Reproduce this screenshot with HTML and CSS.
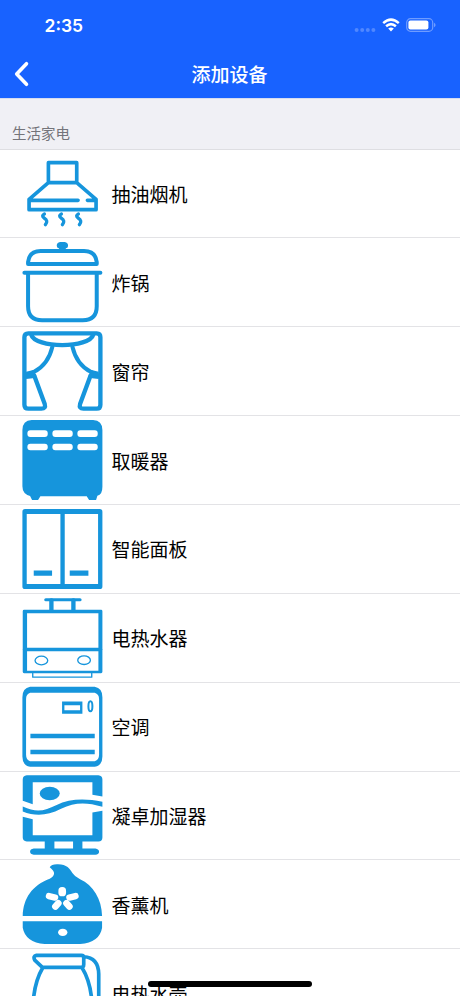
FILE: index.html
```html
<!DOCTYPE html>
<html lang="zh-CN">
<head>
<meta charset="utf-8">
<title>添加设备</title>
<link rel="stylesheet" href="styles.css">
</head>
<body>
<div class="screen">
  <header class="header">
    <div class="status">
      <span class="time">2:35</span>
      <div class="indicators">
        <svg class="dots" width="22" height="6" viewBox="0 0 22 6"><circle cx="2.6" cy="3" r="2"/><circle cx="8.2" cy="3" r="2"/><circle cx="13.8" cy="3" r="2"/><circle cx="19.4" cy="3" r="2"/></svg>
        <svg class="wifi" width="18" height="14" viewBox="0 0 18 14"><path d="M1.2 5.1Q9 -1.8 16.8 5.1M4.1 8.3Q9 4 13.9 8.3"/><path class="tip" d="M6.2 10.5Q9 8.3 11.8 10.5L9 13.5Z"/></svg>
        <svg class="battery" width="30" height="14" viewBox="0 0 30 14"><rect class="case" x=".7" y=".7" width="26" height="12.6" rx="3.8"/><rect class="level" x="2.4" y="2.4" width="20" height="9.2" rx="2"/><path class="cap" d="M28 4.7q1.6 .7 1.6 2.3t-1.6 2.3z"/></svg>
      </div>
    </div>
    <nav class="nav">
      <svg class="back" width="16" height="26" viewBox="0 0 16 26"><path d="M12.5 2.7L2.7 13L12.5 23.3"/></svg>
      <h1 class="title">添加设备</h1>
    </nav>
  </header>
  <h2 class="section">生活家电</h2>
  <ul class="list">
    <li class="row">
      <svg class="icon" viewBox="35.8 9 240 240"><g class="line"><path stroke-width="11" d="M115 38H200V98H115ZM115 98L57 148V179H258V148L200 98M57 151H204M232 151H258"/><path stroke-width="10" d="M103 192q-10 5 -1 12q14 8 4 20M154 192q-10 5 -1 12q14 8 4 20M205 192q-10 5 -1 12q14 8 4 20"/></g></svg>
      <span class="name">抽油烟机</span>
    </li>
    <li class="row">
      <svg class="icon" viewBox="35.8 12 240 240"><g class="line"><path stroke-width="12" d="M54 78V72Q58 39 92 39H222Q256 39 260 72V78ZM43 104H271M54 104V205Q54 247 96 247H218Q260 247 260 205V104"/></g><path class="fill" d="M150 12H164Q174 14 174 23Q174 29 168 31L164 36H150L146 31Q140 29 140 23Q140 14 150 12Z"/></svg>
      <span class="name">炸锅</span>
    </li>
    <li class="row">
      <svg class="icon" viewBox="35.8 15 240 240"><g class="line" stroke-width="13"><path d="M43 34Q43 22 55 22H260Q271 22 271 34V236Q271 248 260 248H220Q206 248 210 234L241 150M43 34V236Q43 248 55 248H94Q108 248 104 234L73 150M63 25C75 68 238 68 250 25"/><path stroke-width="12" d="M127 62Q114 116 72 137L46 150M187 62Q200 116 242 137L268 150"/></g><path class="fill" d="M48 137L70 132L79 148L68 157L48 159ZM266 137L244 132L235 148L246 157L266 159Z"/></svg>
      <span class="name">窗帘</span>
    </li>
    <li class="row">
      <svg class="icon" viewBox="35.8 15 240 240"><path class="fill" d="M65 15H249Q277 17 277 45V215Q277 239 262 242L258 255H237L230 244H91L84 255H66L60 243Q37 237 37 214V45Q37 17 65 15Z"/><g class="white"><rect x="52" y="46" width="61" height="20" rx="9"/><rect x="127" y="46" width="61" height="20" rx="9"/><rect x="202" y="46" width="61" height="20" rx="9"/><rect x="52" y="86" width="61" height="20" rx="9"/><rect x="127" y="86" width="61" height="20" rx="9"/><rect x="202" y="86" width="61" height="20" rx="9"/></g></svg>
      <span class="name">取暖器</span>
    </li>
    <li class="row">
      <svg class="icon" viewBox="35.8 14.7 240 240"><path class="fill" fill-rule="evenodd" d="M45 15H269Q277 15 277 23V247Q277 255 269 255H45Q37 255 37 247V23Q37 15 45 15ZM50 30V240H151V30ZM164 30V240H264V30Z"/><path class="fill" d="M71 199H126V215H71ZM179 199H235V215H179Z"/></svg>
      <span class="name">智能面板</span>
    </li>
    <li class="row">
      <svg class="icon" viewBox="35.8 14.5 240 240"><g class="line"><path stroke-width="9" d="M107 20H210"/><path stroke-width="13" d="M124 22V53M190 22V53"/><path stroke-width="11" d="M44 169H271"/><path stroke-width="4" d="M68 240V252H245V240"/><ellipse cx="94" cy="202" rx="19" ry="13" stroke-width="4"/><ellipse cx="222" cy="201" rx="19" ry="13" stroke-width="4"/></g><path class="fill" fill-rule="evenodd" d="M42 50H273Q277 50 277 54V236Q277 240 273 240H42Q38 240 38 236V54Q38 50 42 50ZM51 60V233H265V60Z"/></svg>
      <span class="name">电热水器</span>
    </li>
    <li class="row">
      <svg class="icon" viewBox="35.8 14.5 240 240"><path class="fill" fill-rule="evenodd" d="M60 14H254Q277 18 277 45V223Q277 250 254 254H60Q37 250 37 223V45Q37 18 60 14ZM60 32Q48 36 48 51V218Q48 234 60 237H254Q267 234 267 218V51Q267 36 254 32Z"/><path class="fill" fill-rule="evenodd" d="M156 58H217V95H156ZM163 69V84H210V69ZM61 155H254V168H61ZM61 203H254V216H61Z"/><ellipse class="ring" cx="241" cy="72" rx="6" ry="15" stroke-width="6"/></svg>
      <span class="name">空调</span>
    </li>
    <li class="row">
      <svg class="icon" viewBox="35.8 16.5 240 240"><path class="fill" d="M50 17H265Q277 18 277 30V81L247 76V38H68V104L38 94V30Q38 18 50 17ZM38 142L68 149V197H247V129L277 124V204Q277 216 265 216H217V237H256Q267 239 267 247Q267 255 256 256H71Q60 254 60 246Q60 239 71 237H104V216H50Q38 215 38 204ZM133 216V237H189V216ZM38 111C82 132 106 122 138 107C180 87 225 86 277 97V112C229 98 194 98 153 118C110 140 74 140 38 126Z"/><ellipse class="fill" cx="119" cy="72" rx="30" ry="20"/></svg>
      <span class="name">凝卓加湿器</span>
    </li>
    <li class="row">
      <svg class="icon" viewBox="35.8 16 240 240"><path class="fill" d="M38 172C39 119 67 79 119 60Q132 54 132 44Q132 37 119 26Q124 16 144 17C170 17 180 31 187 43Q194 54 210 62C249 80 275 121 276 172ZM38 188H276V207Q269 251 210 256H104Q46 251 38 207Z"/><g class="white"><rect x="145" y="85" width="23" height="28" rx="11"/><rect x="107" y="105" width="38" height="19" rx="9.5" transform="rotate(14 126 114)"/><rect x="168" y="105" width="38" height="19" rx="9.5" transform="rotate(-14 187 114)"/><rect x="124" y="129" width="33" height="20" rx="10" transform="rotate(-48 140 139)"/><rect x="157" y="129" width="33" height="20" rx="10" transform="rotate(48 174 139)"/><ellipse cx="158" cy="221" rx="14" ry="11"/></g></svg>
      <span class="name">香薰机</span>
    </li>
    <li class="row">
      <svg class="icon" viewBox="35.8 39.8 240 240"><g class="line" stroke-width="11"><path d="M79 47H214Q221 47 221 54V74Q221 83 212 83H97L74 61Q68 49 79 47ZM221 51Q265 53 266 103V220Q266 240 248 240M98 84Q72 128 69 195V275H246V195Q243 128 216 84"/></g></svg>
      <span class="name">电热水壶</span>
    </li>
  </ul>
  <div class="home"></div>
</div>
</body>
</html>
```
FILE: styles.css
```css
* {
  box-sizing: border-box;
}

body {
  margin: 0;
  font-family: "Noto Sans CJK SC", sans-serif;
  background: #fff;
}

.screen {
  position: relative;
  width: 460px;
  height: 996px;
  overflow: hidden;
}

.header {
  height: 98px;
  background: #1862ff;
  color: #fff;
}

.status {
  display: flex;
  justify-content: space-between;
  align-items: center;
  height: 50px;
  padding: 0 24px 0 44.5px;
}

.time {
  padding-top: 1px;
  font: 600 17.5px/22px Inter, sans-serif;
}

.indicators {
  display: flex;
  align-items: center;
}

.dots {
  fill: #5087ff;
  margin: 9px 6px 0 0;
}

.wifi {
  fill: none;
  stroke: #fff;
  stroke-width: 2.5;
  margin-right: 6px;
}

.wifi .tip {
  fill: #fff;
  stroke: none;
}

.case {
  fill: none;
  stroke: #6f9cff;
  stroke-width: 1.2;
}

.level {
  fill: #fff;
}

.cap {
  fill: #6f9cff;
}

.nav {
  display: grid;
  grid-template-columns: 60px 1fr 61px;
  align-items: center;
  height: 47px;
}

.back {
  margin-left: 13.5px;
  fill: none;
  stroke: #fff;
  stroke-width: 3.6;
  stroke-linecap: round;
  stroke-linejoin: round;
}

.title {
  margin: 0;
  text-align: center;
  font-size: 19px;
  line-height: 28px;
  font-weight: 500;
}

.section {
  display: flex;
  align-items: flex-end;
  height: 52px;
  margin: 0;
  padding: 0 12px 5px;
  border-top: 1px solid #d5dcf0;
  border-bottom: 1px solid #dedee2;
  background: #f0f0f5;
  color: #74747a;
  font-size: 14.5px;
  line-height: 22px;
  font-weight: 400;
}

.list {
  margin: -0.5px 0 0;
  padding: 0;
  list-style: none;
}

.row {
  display: flex;
  align-items: center;
  height: 88.86px;
  padding-left: 22px;
  border-bottom: 1px solid #e3e3e6;
  color: #000;
  font-size: 19px;
  line-height: 28px;
}

.name {
  padding-top: 1px;
}

.icon {
  width: 80px;
  height: 80px;
  margin-right: 9.5px;
  flex: none;
  overflow: visible;
}

.line,
.ring {
  fill: none;
  stroke: #1695dc;
  stroke-linecap: round;
  stroke-linejoin: round;
}

.fill {
  fill: #1695dc;
}

.white {
  fill: #fff;
}

.home {
  position: absolute;
  left: 148px;
  bottom: 9px;
  width: 164px;
  height: 6px;
  border-radius: 3px;
  background: #000;
}
```
